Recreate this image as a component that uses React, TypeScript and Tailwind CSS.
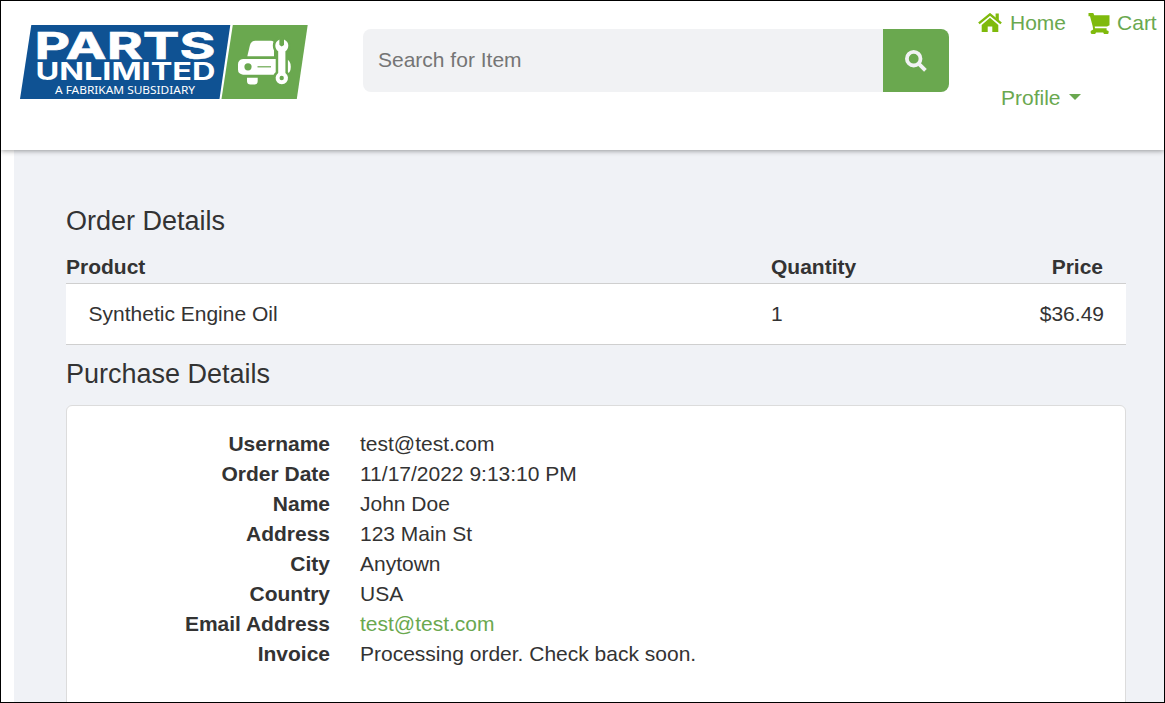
import React from "react";

const details: { label: string; value: string; link?: boolean }[] = [
  { label: "Username", value: "test@test.com" },
  { label: "Order Date", value: "11/17/2022 9:13:10 PM" },
  { label: "Name", value: "John Doe" },
  { label: "Address", value: "123 Main St" },
  { label: "City", value: "Anytown" },
  { label: "Country", value: "USA" },
  { label: "Email Address", value: "test@test.com", link: true },
  { label: "Invoice", value: "Processing order. Check back soon." },
];

function Logo() {
  return (
    <svg width="288" height="74" viewBox="20 25.5 288 74" className="block shrink-0 overflow-visible" aria-label="Parts Unlimited">
      <path d="M31.3 25.5H230.3L219.5 99.5H20Z" fill="#0f5293" />
      <path d="M232.8 25.5H307.7L296.8 99.5H221.5Z" fill="#6aa84f" />
      <g fill="#fff" fontFamily="Inter, 'Liberation Sans', sans-serif">
        <text x="34.5" y="59" fontSize="37" fontWeight="700" textLength="181" lengthAdjust="spacingAndGlyphs" stroke="#fff" strokeWidth=".6">PARTS</text>
        <text x="35.5" y="80" fontSize="23.6" fontWeight="700" textLength="180" lengthAdjust="spacingAndGlyphs">UNLIMITED</text>
      </g>
      <text x="55" y="94.2" fontSize="11.2" fill="#fff" fontFamily="'Noto Sans', sans-serif" textLength="140" lengthAdjust="spacingAndGlyphs">A FABRIKAM SUBSIDIARY</text>
      <path d="M247.3 56.8L250 45.5Q251.3 41.2 255.5 41.2H271Q274 41.2 274 44V56.8Z" fill="#fff" />
      <path d="M243 59.5H286Q290.8 61 290.8 67.3Q290.8 73.5 286 75.2H243Q238 74.5 238 70V65Q238 60 243 59.5Z" fill="#fff" />
      <path d="M247 78.3H257.7V81.5Q257.7 85 254.2 85H250.5Q247 85 247 81.5Z" fill="#fff" />
      <circle cx="248" cy="67.3" r="3.6" fill="#6aa84f" />
      <path d="M257.5 67.3H271" stroke="#6aa84f" strokeWidth="1.2" />
      <path d="M279.5 40V45.5L281.7 47L284 45.5V40Q288.3 42 288.3 46Q288.3 49.8 285.4 51.7V73.5A6.2 6.2 0 1 1 278.2 73.5V51.7Q275.3 49.8 275.3 46Q275.3 42 279.5 40Z" fill="#fff" stroke="#6aa84f" strokeWidth="5" paintOrder="stroke" />
      <path d="M279.7 39H283.8V45L281.7 46.4L279.7 45Z" fill="#6aa84f" />
      <circle cx="281.7" cy="78.5" r="2.2" fill="#6aa84f" />
    </svg>
  );
}

function HomeIcon() {
  return (
    <svg width="24" height="20" viewBox="0 0 24 20" className="shrink-0" fill="#7fba0c">
      <path d="M12 4.8L20.3 12V19H14.3V13.5H9.7V19H3.7V12Z" />
      <path d="M17.6 .5H20.8V7.5L17.6 4.7Z" />
      <path d="M.9 10.4L12 1.4L23.1 10.4" fill="none" stroke="#7fba0c" strokeWidth="2.4" />
    </svg>
  );
}

function CartIcon() {
  return (
    <svg width="22" height="21" viewBox="0 0 22 21" className="shrink-0" fill="#7fba0c">
      <path d="M.5 0H5.3L6.2 2.3H21.5V12.2L19 13.6H6.7L7 15.2H18.6V17.2L20.6 18V20.2L19.8 21H16L15.2 19.4H8L7.2 21H3.6L2.7 20V18L5.2 16.6L4.6 13L2 3.2H.5Z" />
    </svg>
  );
}

export default function App() {
  return (
    <div className="flex h-[703px] w-[1165px] flex-col overflow-hidden border border-black bg-white font-['Liberation_Sans',Arial,sans-serif] text-[21px] text-[#333]">
      <header className="z-10 flex h-[149px] shrink-0 items-start bg-white pl-[19px] shadow-[0_1px_5px_rgba(0,0,0,0.38)]">
        <div className="pt-6">
          <Logo />
        </div>
        <div className="mt-7 ml-[55px] flex h-[63px] w-[586px] shrink-0 overflow-hidden rounded-lg">
          <div className="flex flex-1 items-center bg-[#f1f2f4] pb-0.5 pl-[15px] text-[#757575]">Search for Item</div>
          <button className="flex w-[66px] items-center justify-center bg-[#6aa84f]">
            <svg width="22" height="22" viewBox="0 0 22 22" fill="none" stroke="#f1f2f4" strokeWidth="3.8">
              <circle cx="8.7" cy="8.7" r="6.8" />
              <path d="M13.2 13.2L20.4 20.4" />
            </svg>
          </button>
        </div>
        <nav className="ml-[29px] flex flex-col text-[#6aa84f]">
          <div className="flex h-[44px] items-center">
            <HomeIcon />
            <span className="ml-2 whitespace-nowrap">Home</span>
            <span className="ml-[22px] flex items-center gap-[7px]">
              <CartIcon />
              Cart
            </span>
          </div>
          <div className="mt-[38px] ml-[23px] flex h-[30px] items-center">
            Profile
            <svg width="12" height="6" viewBox="0 0 12 6" className="mb-[3px] ml-2" fill="#6aa84f">
              <path d="M0 0H12L6 6Z" />
            </svg>
          </div>
        </nav>
      </header>
      <main className="ml-[13px] flex flex-1 flex-col bg-[#f0f2f6] pt-[53px] pr-[38px] pl-[52px]">
        <h2 className="h-9 shrink-0 text-[27px] leading-9">Order Details</h2>
        <div className="mt-[13px] flex h-[31px] shrink-0 items-center pr-[23px] pb-0.5 font-bold">
          <span className="w-[705px]">Product</span>
          <span>Quantity</span>
          <span className="ml-auto">Price</span>
        </div>
        <div className="flex h-[62px] shrink-0 items-center border-y border-[#cfcfcf] bg-white pr-[22px] pl-[22.5px]">
          <span className="w-[682.5px]">Synthetic Engine Oil</span>
          <span>1</span>
          <span className="ml-auto">$36.49</span>
        </div>
        <h2 className="mt-[11px] h-9 shrink-0 text-[27px] leading-9">Purchase Details</h2>
        <section className="mt-[13px] h-[330px] shrink-0 rounded-md border border-[#dcdcdc] bg-white pt-[23px]">
          <dl>
            {details.map((d) => (
              <div key={d.label} className="flex h-[30px] items-center">
                <dt className="w-[263px] text-right font-bold">{d.label}</dt>
                <dd className={d.link ? "ml-[30px] text-[#6aa84f]" : "ml-[30px]"}>{d.value}</dd>
              </div>
            ))}
          </dl>
        </section>
      </main>
    </div>
  );
}
